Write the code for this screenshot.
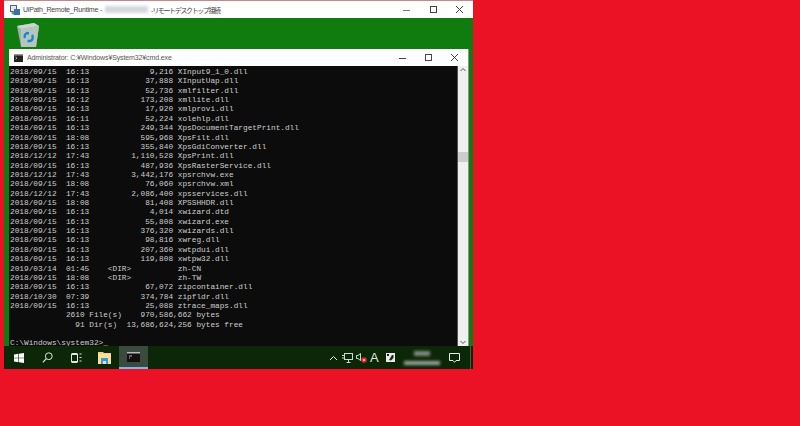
<script lang="ts">
  const rows = [
    ['2018/09/15', '16:13', '9,216', 'XInput9_1_0.dll'],
    ['2018/09/15', '16:13', '37,888', 'XInputUap.dll'],
    ['2018/09/15', '16:13', '52,736', 'xmlfilter.dll'],
    ['2018/09/15', '16:12', '173,208', 'xmllite.dll'],
    ['2018/09/15', '16:13', '17,920', 'xmlprovi.dll'],
    ['2018/09/15', '16:11', '52,224', 'xolehlp.dll'],
    ['2018/09/15', '16:13', '249,344', 'XpsDocumentTargetPrint.dll'],
    ['2018/09/15', '18:08', '595,968', 'XpsFilt.dll'],
    ['2018/09/15', '16:13', '355,840', 'XpsGdiConverter.dll'],
    ['2018/12/12', '17:43', '1,110,528', 'XpsPrint.dll'],
    ['2018/09/15', '16:13', '487,936', 'XpsRasterService.dll'],
    ['2018/12/12', '17:43', '3,442,176', 'xpsrchvw.exe'],
    ['2018/09/15', '18:08', '76,060', 'xpsrchvw.xml'],
    ['2018/12/12', '17:43', '2,086,400', 'xpsservices.dll'],
    ['2018/09/15', '18:08', '81,408', 'XPSSHHDR.dll'],
    ['2018/09/15', '16:13', '4,014', 'xwizard.dtd'],
    ['2018/09/15', '16:13', '55,808', 'xwizard.exe'],
    ['2018/09/15', '16:13', '376,320', 'xwizards.dll'],
    ['2018/09/15', '16:13', '98,816', 'xwreg.dll'],
    ['2018/09/15', '16:13', '207,360', 'xwtpdui.dll'],
    ['2018/09/15', '16:13', '119,808', 'xwtpw32.dll'],
    ['2019/03/14', '01:45', '<DIR>', 'zh-CN'],
    ['2018/09/15', '18:08', '<DIR>', 'zh-TW'],
    ['2018/09/15', '16:13', '67,072', 'zipcontainer.dll'],
    ['2018/10/30', '07:39', '374,784', 'zipfldr.dll'],
    ['2018/09/15', '16:13', '25,088', 'ztrace_maps.dll']
  ]

  function line(r: string[]) {
    if (r[2] === '<DIR>') return r[0] + '  ' + r[1] + '    <DIR>          ' + r[3]
    return r[0] + '  ' + r[1] + ' ' + r[2].padStart(17) + ' ' + r[3]
  }

  const text = [
    ...rows.map(line),
    '            2610 File(s)    970,586,662 bytes',
    '              91 Dir(s)  13,686,624,256 bytes free',
    '',
    'C:\\Windows\\system32>_'
  ]
</script>

<div class="page">
  <div class="rdp">
    <div class="rdp-title">
      <svg width="10" height="10" viewBox="0 0 10 10">
        <rect x=".5" y=".5" width="6" height="6" fill="#e4e8ee" stroke="#5a6472"/>
        <rect x="4" y="4" width="6" height="6" fill="#3a6fb4"/>
        <path d="M1 8l3-2v4z" fill="#4aa548"/>
      </svg>
      <span class="app">UiPath_Remote_Runtime -</span>
      <span class="smudge host"></span>
      <span class="jp">- リモート デスクトップ接続</span>
      <div class="caps outer-caps">
        <svg width="10" height="10" viewBox="0 0 10 10"><path d="M1 5.500h7" stroke="#777" fill="none"/></svg>
        <svg width="10" height="10" viewBox="0 0 10 10"><rect x="1.500" y="1.500" width="6" height="6" fill="none" stroke="#444"/></svg>
        <svg width="10" height="10" viewBox="0 0 10 10"><path d="M1 1l7 7M8 1l-7 7" stroke="#444" fill="none"/></svg>
      </div>
    </div>

    <div class="desktop">
      <svg class="bin" width="22" height="24" viewBox="0 0 22 24">
        <path d="M0 3L17 0l5 3-3 21H4z" fill="#9db2a9"/>
        <path d="M0 3L17 0l5 3-18 3z" fill="#c9d6cf"/>
        <path d="M4 6l18-3-3 21H4z" fill="#b4c6bf"/>
        <path d="M8 15a4 4 0 0 1 2-5l2 .5M15 12a4 4 0 0 1-1.500 6h-3" fill="none" stroke="#1a86d0" stroke-width="2.400"/>
      </svg>

      <div class="cmd">
        <div class="cmd-title">
          <svg width="9" height="8" viewBox="0 0 9 8">
            <rect width="9" height="8" fill="#222"/>
            <rect width="9" height="1.500" fill="#999"/>
            <path d="M1.500 3l1.500 1.200-1.500 1.200" stroke="#ddd" stroke-width=".7" fill="none"/>
          </svg>
          <span>Administrator: C:¥Windows¥System32¥cmd.exe</span>
          <div class="caps inner-caps">
            <svg width="10" height="10" viewBox="0 0 10 10"><path d="M1 5.500h7" stroke="#444" fill="none"/></svg>
            <svg width="10" height="10" viewBox="0 0 10 10"><rect x="1.500" y="1.500" width="6" height="6" fill="none" stroke="#444"/></svg>
            <svg width="10" height="10" viewBox="0 0 10 10"><path d="M1 1l7 7M8 1l-7 7" stroke="#444" fill="none"/></svg>
          </div>
        </div>
        <div class="cmd-body">
          <pre class="console">{text.join('\n')}</pre>
          <div class="scroll">
            <svg width="10" height="8" viewBox="0 0 10 8"><path d="M2.500 5l2.500-2.500L7.500 5" stroke="#555" fill="none"/></svg>
            <div class="track"><div class="thumb"></div></div>
            <svg width="10" height="8" viewBox="0 0 10 8"><path d="M2.500 3l2.500 2.500L7.500 3" stroke="#555" fill="none"/></svg>
          </div>
        </div>
      </div>
    </div>

    <div class="taskbar">
      <div class="task-btn">
        <svg width="10" height="10" viewBox="0 0 10 10"><path d="M0 1.400L4.400.8v3.900H0zM5 .7L10 0v4.700H5zM0 5.300h4.400v3.900L0 8.600zM5 5.300h5V10l-5-.7z" fill="#fff"/></svg>
      </div>
      <div class="task-btn">
        <svg width="11" height="11" viewBox="0 0 11 11"><circle cx="6.800" cy="4.200" r="3.400" fill="none" stroke="#dfe6df"/><path d="M4.400 6.600L.8 10.400" stroke="#dfe6df" stroke-width="1.200"/></svg>
      </div>
      <div class="task-btn">
        <svg width="11" height="10" viewBox="0 0 11 10"><rect x=".5" y="1.500" width="6" height="7" fill="none" stroke="#dfe6df"/><path d="M8.500 1h2M8.500 4.500h2M8.500 8h2M.5 .5h6M.5 9.500h6" stroke="#dfe6df"/></svg>
      </div>
      <div class="task-btn">
        <svg width="13" height="12" viewBox="0 0 13 12"><path d="M0 0h5l1 1h7v11H0z" fill="#f4d27a"/><rect y="2" width="13" height="10" fill="#f9e09a"/><rect x="3" y="6" width="7" height="6" fill="#2f9be0"/><rect x="5" y="9" width="3" height="3" fill="#f9e09a"/></svg>
      </div>
      <div class="task-btn active">
        <svg width="13" height="10" viewBox="0 0 13 10"><rect width="13" height="10" fill="#111"/><rect width="13" height="1.500" fill="#bbb"/><path d="M2 4h3M2 6h1" stroke="#ddd" stroke-width=".8"/></svg>
      </div>

      <div class="tray">
        <svg class="chevron" width="9" height="6" viewBox="0 0 9 6"><path d="M1 5l3.500-3.500L8 5" stroke="#e6ece6" fill="none"/></svg>
        <svg width="11" height="10" viewBox="0 0 11 10"><rect x="2.500" y=".5" width="8" height="6" fill="none" stroke="#cfd8cf"/><path d="M6.500 7v2M4.500 9.500h4M0 2.500h2.500M0 5h2.500" stroke="#cfd8cf"/></svg>
        <svg width="11" height="11" viewBox="0 0 11 11"><path d="M.5 3.500h1.500L4.500 1.500v7L2 6.500H.5z" fill="none" stroke="#cfd8cf"/><circle cx="8" cy="8" r="2.800" fill="#e8242c"/><path d="M7 7l2 2M9 7l-2 2" stroke="#fff" stroke-width=".7"/></svg>
        <span class="ime">A</span>
        <svg class="ime-pad" width="9" height="9" viewBox="0 0 9 9"><rect width="9" height="9" fill="#e8ece8"/><path d="M3 7l3-5h1.500v3L5 7.500z" fill="#222"/><rect x="1" y="1" width="2" height="2" fill="#222"/></svg>
        <div class="clock">
          <span class="smudge time"></span>
          <span class="smudge date"></span>
        </div>
        <svg width="11" height="10" viewBox="0 0 11 10"><path d="M.5.5h10v7H7L5.500 9.300 4 7.500H.5z" fill="none" stroke="#e6ece6"/></svg>
        <span class="show-desktop"></span>
      </div>
    </div>
  </div>
</div>

<style>
  :global(body) {
    margin: 0;
    background: #ec1225;
  }
  .page {
    width: 800px;
    height: 426px;
    padding-left: 4px;
    box-sizing: border-box;
    overflow: hidden;
  }
  .rdp {
    width: 469px;
    height: 369px;
    display: flex;
    flex-direction: column;
  }
  .rdp-title {
    height: 18px;
    flex: none;
    box-sizing: border-box;
    border-top: 1px solid #c08a8a;
    background: #fff;
    display: flex;
    align-items: center;
    gap: 3px;
    font: 7px "Liberation Sans", "Noto Sans CJK JP", sans-serif;
    color: #444;
    white-space: nowrap;
    padding-left: 6px;
  }
  .app {
    letter-spacing: -.2px;
  }
  .jp {
    font-family: "Noto Sans CJK JP", sans-serif;
    font-size: 7px;
    letter-spacing: -1.400px;
  }
  .smudge {
    display: block;
    background: #b6bcc0;
    filter: blur(1.500px);
  }
  .host {
    width: 43px;
    height: 7px;
    background: #d4d8dc;
  }
  .caps {
    margin-left: auto;
    display: flex;
  }
  .outer-caps {
    gap: 16.500px;
    padding-right: 8px;
  }
  .desktop {
    flex: 1;
    min-height: 0;
    background: #107c10;
    padding: 5px 4px 0 5px;
    display: flex;
    flex-direction: column;
  }
  .bin {
    flex: none;
    margin-left: 8px;
    display: block;
  }
  .cmd {
    margin-top: 2px;
    flex: 1;
    min-height: 0;
    display: flex;
    flex-direction: column;
    border-right: 1px solid #8a958a;
  }
  .cmd-title {
    height: 17px;
    flex: none;
    background: #fff;
    display: flex;
    align-items: center;
    font: 7px "Liberation Sans", sans-serif;
    letter-spacing: -.12px;
    color: #555;
    padding-left: 5px;
    gap: 4px;
    white-space: nowrap;
  }
  .inner-caps {
    gap: 16px;
    padding-right: 8px;
  }
  .cmd-body {
    flex: 1;
    min-height: 0;
    display: flex;
  }
  .console {
    flex: 1;
    margin: 0;
    background: #0c0c0c;
    color: #cccccc;
    font: 7.780px/9.360px "Liberation Mono", monospace;
    padding: 2px 0 0 1px;
    overflow: hidden;
    white-space: pre;
  }
  .scroll {
    width: 10px;
    background: #f0f0f0;
    border-left: 1px solid #555;
    display: flex;
    flex-direction: column;
    align-items: center;
  }
  .track {
    flex: 1;
    width: 100%;
    padding-top: 78px;
    box-sizing: border-box;
  }
  .thumb {
    height: 10px;
    background: #cdcdcd;
  }
  .taskbar {
    height: 23px;
    flex: none;
    background: #0c2608;
    display: flex;
    align-items: stretch;
    padding-left: 1px;
  }
  .task-btn {
    width: 28.500px;
    display: flex;
    align-items: center;
    justify-content: center;
    box-sizing: border-box;
  }
  .task-btn.active {
    background: #3a4a3c;
    border-bottom: 2px solid #76b9ed;
  }
  .tray {
    margin-left: auto;
    display: flex;
    align-items: center;
    gap: 3px;
  }
  .chevron {
    margin-right: 1px;
  }
  .ime {
    width: 9px;
    font: 13px/1 "Liberation Sans", sans-serif;
    color: #dfe6df;
  }
  .ime-pad {
    margin-left: 4px;
  }
  .clock {
    width: 37px;
    margin: 0 6px 0 5px;
    display: flex;
    flex-direction: column;
    align-items: center;
    gap: 5px;
  }
  .time {
    width: 16px;
    height: 5px;
    background: #7e8a7e;
  }
  .date {
    width: 36px;
    height: 4px;
    background: #99a499;
  }
  .show-desktop {
    width: 1px;
    height: 100%;
    background: #4a5a4a;
    margin: 0 2px 0 7px;
  }
</style>
